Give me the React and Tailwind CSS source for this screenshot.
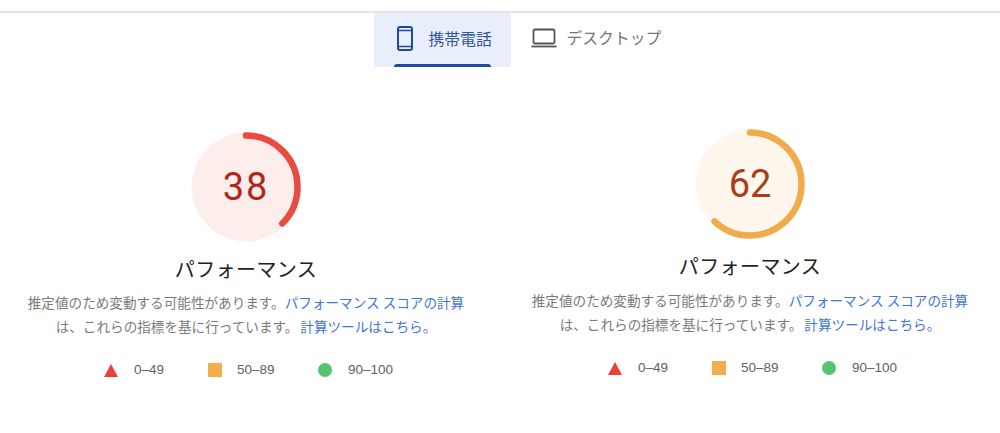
import React from "react";

const FONT = "font-['Roboto','Noto_Sans_CJK_JP',sans-serif]";
const CJK = "font-['Noto_Sans_CJK_JP','Noto_Sans',sans-serif]";
const LEGEND = "font-['Liberation_Sans',sans-serif]";

function Gauge({ score, pct, track, arc, text, tracking }) {
  const r = 51.5;
  const c = 2 * Math.PI * r;
  return (
    <div className="relative w-[110px] h-[110px]">
      <svg width="110" height="110" viewBox="0 0 110 110" className="block">
        <circle cx="55" cy="55" r="54.5" fill={track} />
        <circle
          cx="55"
          cy="55"
          r={r}
          fill="none"
          stroke={arc}
          strokeWidth="6.5"
          strokeLinecap="round"
          strokeDasharray={`${(c * pct) / 100} ${c}`}
          transform="rotate(-90 55 55)"
        />
      </svg>
      <div
        className={`absolute inset-0 flex items-center justify-center text-[38px] leading-none ${FONT} ${tracking}`}
        style={{ color: text }}
      >
        {score}
      </div>
    </div>
  );
}

function Legend() {
  return (
    <div className={`flex items-center justify-center mt-[23px] pl-[6px] h-[18px] text-[13.5px] text-[#616161] ${LEGEND}`}>
      <div className="flex items-center w-[104px]">
        <svg width="14" height="13" viewBox="0 0 14 13" className="mr-[16px]">
          <polygon points="7,0 14,13 0,13" fill="#e8403a" />
        </svg>
        <span>0–49</span>
      </div>
      <div className="flex items-center w-[110px]">
        <div className="w-[14px] h-[14px] bg-[#f2ae4c] mr-[15px]" />
        <span>50–89</span>
      </div>
      <div className="flex items-center w-[76px]">
        <div className="w-[14px] h-[14px] rounded-full bg-[#55c46e] mr-[16px]" />
        <span>90–100</span>
      </div>
    </div>
  );
}

function Column({ score, pct, track, arc, text, tracking, offset, gap }) {
  return (
    <div className={`w-[460px] flex flex-col items-center ${offset}`}>
      <Gauge score={score} pct={pct} track={track} arc={arc} text={text} tracking={tracking} />
      <h2 className={`mt-[11px] text-[20px] leading-[32px] tracking-[0.4px] font-normal text-[#212121] ${CJK}`}>パフォーマンス</h2>
      <p className={`${gap} text-[13.6px] leading-[24px] text-[#7a7a7a] text-center ${CJK}`}>
        推定値のため変動する可能性があります。
        <a className="text-[#4075dc]">パフォーマンス スコアの計算</a>
        <br />
        は、これらの指標を基に行っています。
        <a className="ml-[2px] text-[#4075dc]">計算ツールはこちら。</a>
      </p>
      <Legend />
    </div>
  );
}

export default function App() {
  return (
    <div className="w-[1000px] h-[433px] bg-white overflow-hidden pt-[11px]">
      <div className="border-t-2 border-[#e4e4e4]">
        <div className="flex justify-center pl-[74px] pr-0">
          <div className="relative w-[137px] h-[54px] bg-[#e8effb] flex items-center pl-[23px] pb-[3px] gap-[16px]">
            <svg width="16" height="25" viewBox="0 0 16 25" fill="none" stroke="#1f4a9c" strokeWidth="2">
              <rect x="1" y="1" width="14" height="23" rx="2" />
              <path d="M1 4.5h14M1 20.5h14" strokeWidth="1.4" />
            </svg>
            <span className={`text-[15.8px] text-[#34539e] ${CJK}`}>携帯電話</span>
            <div className="absolute left-[20px] bottom-0 w-[97px] h-[3px] bg-[#1f4a9c] rounded-t-[3px]" />
          </div>
          <div className="w-[190px] h-[54px] flex items-center pl-[20px] pb-[4px] gap-[10px]">
            <svg width="26" height="20" viewBox="0 0 26 20" fill="none" stroke="#555" strokeWidth="1.8">
              <rect x="2.5" y="1.5" width="21" height="14" rx="1.5" />
              <path d="M0.5 18.5h25" />
            </svg>
            <span className={`text-[15.8px] text-[#757575] ${CJK}`}>デスクトップ</span>
          </div>
        </div>
        <div className="flex pl-[16px] gap-[44px] mt-[65px]">
          <Column score="38" pct={37.5} track="#fdeeec" arc="#ea4a3f" text="#b3261a" tracking="tracking-[2px]" offset="mt-0" gap="mt-[5px]" />
          <Column score="62" pct={62} track="#fff7ee" arc="#f0ab4a" text="#a93d17" tracking="tracking-normal" offset="-mt-[3px]" gap="mt-[6px]" />
        </div>
      </div>
    </div>
  );
}
